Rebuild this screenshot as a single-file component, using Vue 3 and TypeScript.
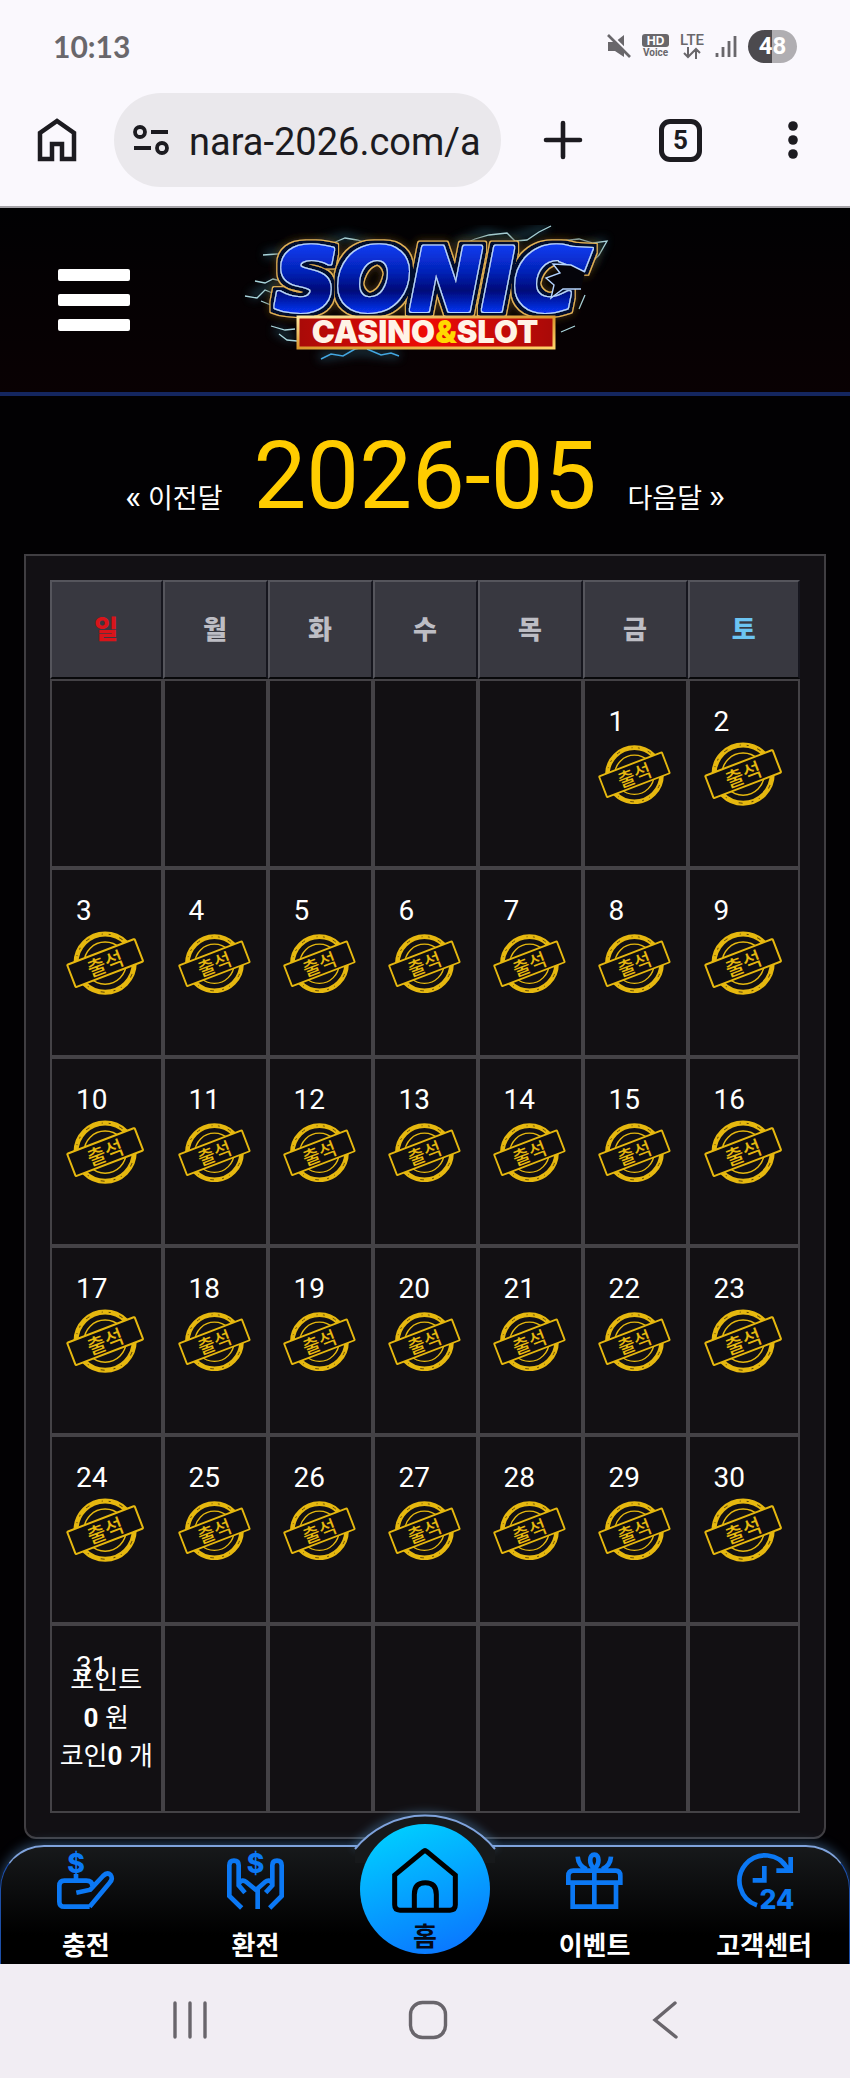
<script setup lang="ts">
import { computed, ref } from 'vue'

interface Day {
  date: number | null
  stamped: boolean
}

const year = ref(2026)
const month = ref(5)
const today = 31
const address = ref('nara-2026.com/a')
const weekdays = ['일', '월', '화', '수', '목', '금', '토']

const title = computed(() => `${year.value}-${String(month.value).padStart(2, '0')}`)

const weeks = computed<Day[][]>(() => {
  const first = new Date(year.value, month.value - 1, 1).getDay()
  const total = new Date(year.value, month.value, 0).getDate()
  const rows = Math.ceil((first + total) / 7)
  return Array.from({ length: rows }, (_, r) =>
    Array.from({ length: 7 }, (_, c) => {
      const n = r * 7 + c - first + 1
      const date = n > 0 && n <= total ? n : null
      return { date, stamped: date !== null && date < today }
    })
  )
})

function shift(step: number) {
  const d = new Date(year.value, month.value - 1 + step, 1)
  year.value = d.getFullYear()
  month.value = d.getMonth() + 1
}
</script>

<template>
  <div class="phone">
    <div class="status">
      <span class="clock">10:13</span>
      <div class="indicators">
        <svg class="mute" viewBox="0 0 24 24" aria-label="무음">
          <path d="M1 8h7l9-7v22L8 17H1z" fill="#69676b" />
          <path d="M3 0 24 21" stroke="#faf8fd" stroke-width="2.4" />
          <path d="M1 1 23 23" stroke="#69676b" stroke-width="2.6" />
        </svg>
        <span class="voice"><b>HD</b><small>Voice</small></span>
        <span class="lte">LTE
          <svg viewBox="0 0 20 12" aria-hidden="true">
            <path d="M6 0v10M2 6l4 4 4-4M14 12V2M10 6l4-4 4 4" fill="none" stroke="#69676b" stroke-width="2" />
          </svg>
        </span>
        <svg class="signal" viewBox="0 0 22 24" aria-label="신호">
          <path d="M2 19v4M8 13v10M14 7v16M20 2v21" stroke="#69676b" stroke-width="2.8" />
        </svg>
        <span class="battery">48</span>
      </div>
    </div>

    <div class="browser">
      <button class="plain" aria-label="홈페이지">
        <svg class="ic40" viewBox="0 0 40 44">
          <path d="M3 41V15L20 3l17 12v26H25V26H15v15z" fill="none" stroke="#1c1b20" stroke-width="4.5" />
        </svg>
      </button>
      <div class="address">
        <svg viewBox="0 0 36 30" aria-hidden="true">
          <g fill="none" stroke="#1c1b20" stroke-width="3.8">
            <circle cx="7" cy="7" r="5" /><circle cx="29" cy="23" r="5" />
            <path d="M18 7h17M1 23h17" />
          </g>
        </svg>
        <input v-model="address" type="text" aria-label="주소" />
      </div>
      <button class="plain plus" aria-label="새 탭">
        <svg class="ic40" viewBox="0 0 40 40">
          <path d="M20 3v34M3 20h34" stroke="#1c1b20" stroke-width="4.6" stroke-linecap="round" />
        </svg>
      </button>
      <button class="tabs" aria-label="탭 5개">5</button>
      <button class="plain more" aria-label="더보기">
        <svg viewBox="0 0 10 40">
          <g fill="#1c1b20"><circle cx="5" cy="6" r="4.8" /><circle cx="5" cy="20" r="4.8" /><circle cx="5" cy="34" r="4.8" /></g>
        </svg>
      </button>
    </div>

    <header class="site">
      <button class="burger" aria-label="메뉴"><i></i><i></i><i></i></button>
      <a class="logo" href="#" aria-label="SONIC CASINO&amp;SLOT">
        <svg viewBox="0 0 380 150">
          <defs>
            <linearGradient id="blue" gradientUnits="userSpaceOnUse" x1="0" y1="20" x2="0" y2="87">
              <stop offset="0" stop-color="#0a3cf0" />
              <stop offset="0.4" stop-color="#0522b8" />
              <stop offset="0.68" stop-color="#020a78" />
              <stop offset="1" stop-color="#0734f0" />
            </linearGradient>
            <linearGradient id="red" x1="0" y1="0" x2="1" y2="0">
              <stop offset="0" stop-color="#a80a08" />
              <stop offset="0.5" stop-color="#ee0a06" />
              <stop offset="1" stop-color="#a80a08" />
            </linearGradient>
            <linearGradient id="gold" x1="0" y1="0" x2="1" y2="1">
              <stop offset="0" stop-color="#ffe9a0" />
              <stop offset="0.5" stop-color="#d9962c" />
              <stop offset="1" stop-color="#ffd36a" />
            </linearGradient>
            <filter id="soft" x="-20%" y="-40%" width="140%" height="180%"><feGaussianBlur stdDeviation="5" /></filter>
            <!-- pale rim, navy gap, gold edge and glow round the word mark -->
            <filter id="rims" x="-10%" y="-30%" width="120%" height="160%">
              <feMorphology in="SourceAlpha" operator="dilate" radius="1" result="a1" />
              <feMorphology in="SourceAlpha" operator="dilate" radius="4" result="a2" />
              <feMorphology in="SourceAlpha" operator="dilate" radius="5" result="a3" />
              <feGaussianBlur in="a3" stdDeviation="4" result="a4" />
              <feFlood flood-color="#b4d4ff" /><feComposite in2="a1" operator="in" result="pale" />
              <feFlood flood-color="#04102e" /><feComposite in2="a2" operator="in" result="navy" />
              <feFlood flood-color="#e2b257" /><feComposite in2="a3" operator="in" result="edge" />
              <feFlood flood-color="#4a3414" /><feComposite in2="a4" operator="in" result="glow" />
              <feMerge>
                <feMergeNode in="glow" /><feMergeNode in="edge" /><feMergeNode in="navy" />
                <feMergeNode in="pale" /><feMergeNode in="SourceGraphic" />
              </feMerge>
            </filter>
          </defs>
          <g fill="none" stroke="#2d6f86" stroke-width="7" opacity="0.5" filter="url(#soft)">
            <path d="M16 72l24-14 4 24M30 30l40-6 40-12 28 8M220 20l30-12 26 6 36-12M346 22l20-4-10 22M40 104l18 10M84 132l40-6 40 4" />
          </g>
          <g fill="none" stroke="#a9d5dc" stroke-width="1.3">
            <path d="M10 71l12 2 8-8 10 4M20 56l10 2 8-4 8 2M26 76l10 4 8-2M28 30l14-1 14-4M98 18l12-5 12 2 14 4" />
            <path d="M226 20l14-6 14-4 18-2 8 8 12-1 12-8 12-6M326 16l18-2 14 4 14-2-8 14-8 8" />
            <path d="M36 101l14 4 10-1M44 109l8 6 10 1M350 70l-6 14M326 107l14-6" />
          </g>
          <path d="M86 134l10-5 12 2 12-7 10-2M132 124l14 6 10-2 8 3" fill="none" stroke="#43a6e0" stroke-width="1.5" />
          <g fill="url(#blue)" filter="url(#rims)">
            <text class="brand" x="40" y="85" stroke="url(#blue)" stroke-width="4">SONIC</text>
            <path d="M322 21 358 23 349 46 324 36z" />
          </g>
          <path d="M350 47 336 40 318 39 325 48 311 53 319 60 316 73 328 64 346 64Z" fill="#05040a" />
          <path d="M350 47 336 40 318 39 325 48 311 53 319 60 316 73 328 64 346 64" fill="none" stroke="#b4d4ff" stroke-width="1.4" />
          <rect x="63" y="92" width="256" height="31" fill="url(#red)" stroke="url(#gold)" stroke-width="3" />
          <text class="sub" x="190" y="118" text-anchor="middle">CASINO<tspan fill="#ffd800">&amp;</tspan>SLOT</text>
        </svg>
      </a>
    </header>

    <main>
      <div class="month">
        <button class="step" @click="shift(-1)"><span>«</span> 이전달</button>
        <h1>{{ title }}</h1>
        <button class="step" @click="shift(1)">다음달 <span>»</span></button>
      </div>

      <section class="panel">
        <table>
          <colgroup><col class="edge" /><col span="5" /><col class="edge" /></colgroup>
          <thead>
            <tr><th v-for="d in weekdays" :key="d" scope="col">{{ d }}</th></tr>
          </thead>
          <tbody>
            <tr v-for="(week, r) in weeks" :key="r">
              <td v-for="(day, c) in week" :key="c">
                <div class="cell">
                  <span v-if="day.date" class="num">{{ day.date }}</span>
                  <svg v-if="day.stamped" class="stamp" viewBox="0 0 80 66">
                    <g fill="none" stroke="#e6b80f">
                      <circle cx="39" cy="34" r="29" stroke-width="5" />
                      <circle cx="39" cy="34" r="29" stroke="#5a4408" stroke-width="1" stroke-dasharray="2 9 4 13 1 6" />
                      <circle cx="39" cy="34" r="21" stroke-width="1.5" />
                      <rect x="3" y="22" width="72" height="24" rx="1" transform="rotate(-21 39 34)" fill="#100e10" stroke-width="2" />
                    </g>
                    <text x="39" y="42" transform="rotate(-21 39 34)" text-anchor="middle">출석</text>
                  </svg>
                  <p v-if="day.date === today" class="reward">포인트<br /><b>0</b> 원<br />코인<b>0</b> 개</p>
                </div>
              </td>
            </tr>
          </tbody>
        </table>
      </section>
    </main>

    <nav class="dock">
      <svg class="hump" viewBox="0 0 180 60" aria-hidden="true">
        <defs>
          <filter id="halo" x="-20%" y="-60%" width="140%" height="220%"><feGaussianBlur stdDeviation="5" /></filter>
        </defs>
        <path d="M21 45A90 90 0 0 1 159 45" fill="none" stroke="#5da0d8" stroke-width="7" opacity="0.45" filter="url(#halo)" />
        <path d="M20 60V46A90 90 0 0 1 160 46V60z" fill="#17191b" />
        <path d="M20 46A90 90 0 0 1 160 46" fill="none" stroke="#7fa3dc" stroke-width="2" />
      </svg>
      <a href="#">
        <svg viewBox="0 0 171 171">
          <path d="M98 164H22Q7 164 7 149V102Q7 86 22 86H88Q106 86 106 102M57 66V86M58 122 100 113 138 72Q151 59 161 69 169 80 158 92L98 164" />
          <text x="57" y="64" text-anchor="middle">$</text>
        </svg>
        <span>충전</span>
      </a>
      <a href="#">
        <svg viewBox="0 0 171 171">
          <path d="M44 168 7 132V40Q7 26 21 26 35 26 35 40V100L54 122M36 94Q45 80 58 90L87 114 114 90Q127 80 136 94M92 112V171M128 168 164 132V40Q164 26 150 26 136 26 136 40V100L116 122" />
          <text x="86" y="64" text-anchor="middle">$</text>
        </svg>
        <span>환전</span>
      </a>
      <a href="#" class="home">
        <svg viewBox="0 0 210 206">
          <path d="M100 16Q105 11 110 16L196 87V176Q196 192 180 192H30Q14 192 14 176V87zM73 192V145Q73 110 106 110 139 110 139 145V192" />
        </svg>
        <span>홈</span>
      </a>
      <a href="#">
        <svg viewBox="0 0 171 171">
          <path d="M7 92V72Q7 56 22 56H149Q163 56 163 72V92ZM20 92V164H150V92M85 50V164M85 50C68 36 69 8 85 8S102 36 85 50M35 14Q37 42 62 52M135 14Q133 42 108 52" />
        </svg>
        <span>이벤트</span>
      </a>
      <a href="#">
        <svg viewBox="0 0 171 171">
          <path d="M63 160A77 77 0 1 1 155 50M164 15V56H121M138 30 160 54M85 42V85H50" />
          <text class="hours" x="123" y="170" text-anchor="middle">24</text>
        </svg>
        <span>고객센터</span>
      </a>
    </nav>

    <div class="system">
      <button class="plain" aria-label="최근 앱">
        <svg viewBox="0 0 40 40"><path d="M5 3v34M20 3v34M35 3v34" /></svg>
      </button>
      <button class="plain" aria-label="홈 화면">
        <svg viewBox="0 0 40 40"><rect x="2.5" y="2.5" width="35" height="35" rx="12" /></svg>
      </button>
      <button class="plain" aria-label="뒤로">
        <svg viewBox="0 0 40 40"><path d="M29 3 9 20l21 17" /></svg>
      </button>
    </div>
  </div>
</template>

<style>
body {
  background: #000;
}
</style>

<style scoped>
* {
  box-sizing: border-box;
}
.phone {
  font-family: Roboto, "Noto Sans CJK KR", sans-serif;
  color: #fff;
  background: #020103;
}
button {
  font: inherit;
  color: inherit;
  background: none;
  border: 0;
  padding: 0;
  cursor: pointer;
}
a {
  color: inherit;
  text-decoration: none;
}
svg {
  display: block;
}
.status {
  display: flex;
  align-items: center;
  justify-content: space-between;
  height: 92px;
  padding: 0 53px;
  background: #faf8fd;
  color: #69676b;
}
.clock {
  font: 700 30px/40px Lato, sans-serif;
}
.indicators {
  display: flex;
  align-items: center;
  gap: 11px;
}
.mute {
  width: 24px;
  height: 24px;
}
.voice {
  display: flex;
  flex-direction: column;
  align-items: center;
  width: 27px;
}
.voice b {
  width: 27px;
  border-radius: 3px;
  background: #69676b;
  color: #fff;
  font: 700 12px/13px Inter, sans-serif;
  text-align: center;
}
.voice small {
  font: 700 10px/12px Roboto, sans-serif;
}
.lte {
  font: 500 15px/14px Roboto, sans-serif;
}
.lte svg {
  width: 20px;
  height: 12px;
  margin: 0 auto;
}
.signal {
  width: 22px;
  height: 24px;
}
.battery {
  width: 49px;
  border-radius: 17px;
  background: linear-gradient(90deg, #4c4a4e 48%, #b0aeb2 48%);
  color: #fff;
  font: 700 24px/33px Roboto, sans-serif;
  text-align: center;
}
.browser {
  display: flex;
  align-items: center;
  height: 116px;
  padding: 0 52px 18px 37px;
  border-bottom: 2px solid #a5a3a8;
  background: #faf8fd;
  color: #1c1b20;
}
.ic40 {
  width: 40px;
  height: 44px;
}
.address {
  display: flex;
  flex: 1;
  align-items: center;
  gap: 20px;
  min-width: 0;
  height: 94px;
  margin-left: 37px;
  padding: 0 18px 0 19px;
  border-radius: 47px;
  background: #eae8ec;
}
.address svg {
  flex: none;
  width: 36px;
  height: 30px;
}
.address input {
  flex: 1;
  min-width: 0;
  padding: 4px 0 0;
  border: 0;
  background: none;
  color: #1c1b20;
  font: 400 38px/50px Roboto, sans-serif;
}
.plus {
  margin-left: 42px;
}
.tabs {
  width: 43px;
  height: 43px;
  margin-left: 76px;
  border: 5px solid #1c1b20;
  border-radius: 11px;
  font: 700 26px/32px Roboto, sans-serif;
}
.more {
  margin-left: 86px;
}
.more svg {
  width: 10px;
  height: 40px;
}
.site {
  display: grid;
  grid-template-columns: 1fr auto 1fr;
  align-items: center;
  height: 188px;
  padding: 0 58px;
  border-bottom: 4px solid #14265f;
  background: linear-gradient(#010103, #090103);
}
.burger {
  display: grid;
  gap: 13px;
  width: 72px;
}
.burger i {
  height: 12px;
  border-radius: 2px;
  background: #fff;
}
.logo svg {
  width: 380px;
  height: 150px;
}
.brand {
  font: italic 700 86px "DejaVu Sans", sans-serif;
  stroke-linejoin: round;
}
.sub {
  font: 900 31px Inter, sans-serif;
  fill: #fff3e6;
}
.month {
  display: flex;
  align-items: baseline;
  justify-content: center;
  gap: 31px;
  height: 158px;
  padding-top: 25px;
}
.month h1 {
  margin: 0;
  color: #fc0;
  font-size: 94px;
  font-weight: 400;
  line-height: 110px;
}
.step {
  font-size: 27px;
}
.step span {
  font-size: 34px;
}
.panel {
  margin: 0 24px 6px;
  padding: 24px;
  border: 2px solid #403e42;
  border-radius: 0 0 12px 12px;
  background: #121014;
}
table {
  width: 100%;
  table-layout: fixed;
  border-collapse: separate;
  border-spacing: 0;
}
.edge {
  width: 15%;
}
th {
  height: 99px;
  padding: 0 0 4px;
  border: 2px solid;
  border-color: #55555c #16161e #08080a #55555c;
  background: #383840;
  color: #bdbdc4;
  font-size: 26px;
  font-weight: 900;
}
th:first-child {
  color: #d8141a;
}
th:last-child {
  color: #6cc4f2;
}
td {
  height: 189px;
  padding: 0;
  border: 2px solid #444246;
  background: #121013;
}
.cell {
  position: relative;
  display: flex;
  align-items: center;
  justify-content: center;
  height: 185px;
}
.num {
  position: absolute;
  top: 24px;
  left: 24px;
  font-size: 28px;
  line-height: 34px;
}
.stamp {
  width: 74%;
}
.stamp text {
  fill: #e6b80f;
  font: 500 20px "Noto Sans CJK KR", sans-serif;
}
.reward {
  margin: 0;
  padding-bottom: 2px;
  font-size: 26px;
  line-height: 38px;
  text-align: center;
  white-space: nowrap;
}
.dock {
  position: relative;
  display: grid;
  grid-template-columns: repeat(5, 1fr);
  height: 119px;
  border: 1px solid #1d4fa8;
  border-top: 2px solid #7fa3dc;
  border-bottom: 0;
  border-radius: 44px 44px 0 0;
  background: linear-gradient(#17191b, #000 75%);
  box-shadow: 0 -2px 12px rgba(90, 150, 210, 0.45);
}
.hump {
  position: absolute;
  bottom: 101px;
  left: calc(50% - 90px);
  width: 180px;
  height: 60px;
  overflow: visible;
}
.dock a {
  position: relative;
  display: flex;
  flex-direction: column;
  align-items: center;
  gap: 20px;
  padding-top: 5px;
  font-size: 26px;
  font-weight: 700;
  line-height: 34px;
}
.dock a svg {
  width: 57px;
  height: 57px;
  overflow: visible;
  fill: none;
  stroke: #0b78f4;
  stroke-width: 14;
}
.dock a text {
  fill: #0b78f4;
  stroke: none;
  font: 800 80px Inter, sans-serif;
}
.dock .home {
  justify-self: center;
  width: 130px;
  height: 130px;
  margin-top: -23px;
  padding-top: 22px;
  gap: 5px;
  border-radius: 50%;
  background: linear-gradient(160deg, #00ccff 10%, #0a78ff 90%);
  color: #050a18;
}
.dock .home svg {
  width: 70px;
  height: 70px;
  stroke: #000;
  stroke-width: 15;
}
.system {
  position: relative;
  display: flex;
  justify-content: space-between;
  height: 115px;
  padding: 36px 164px 0 170px;
  background: #f1edf3;
}
.system button {
  height: 40px;
}
.system svg {
  width: 40px;
  height: 40px;
  fill: none;
  stroke: #69656b;
  stroke-width: 3.4;
  stroke-linecap: round;
}
</style>
